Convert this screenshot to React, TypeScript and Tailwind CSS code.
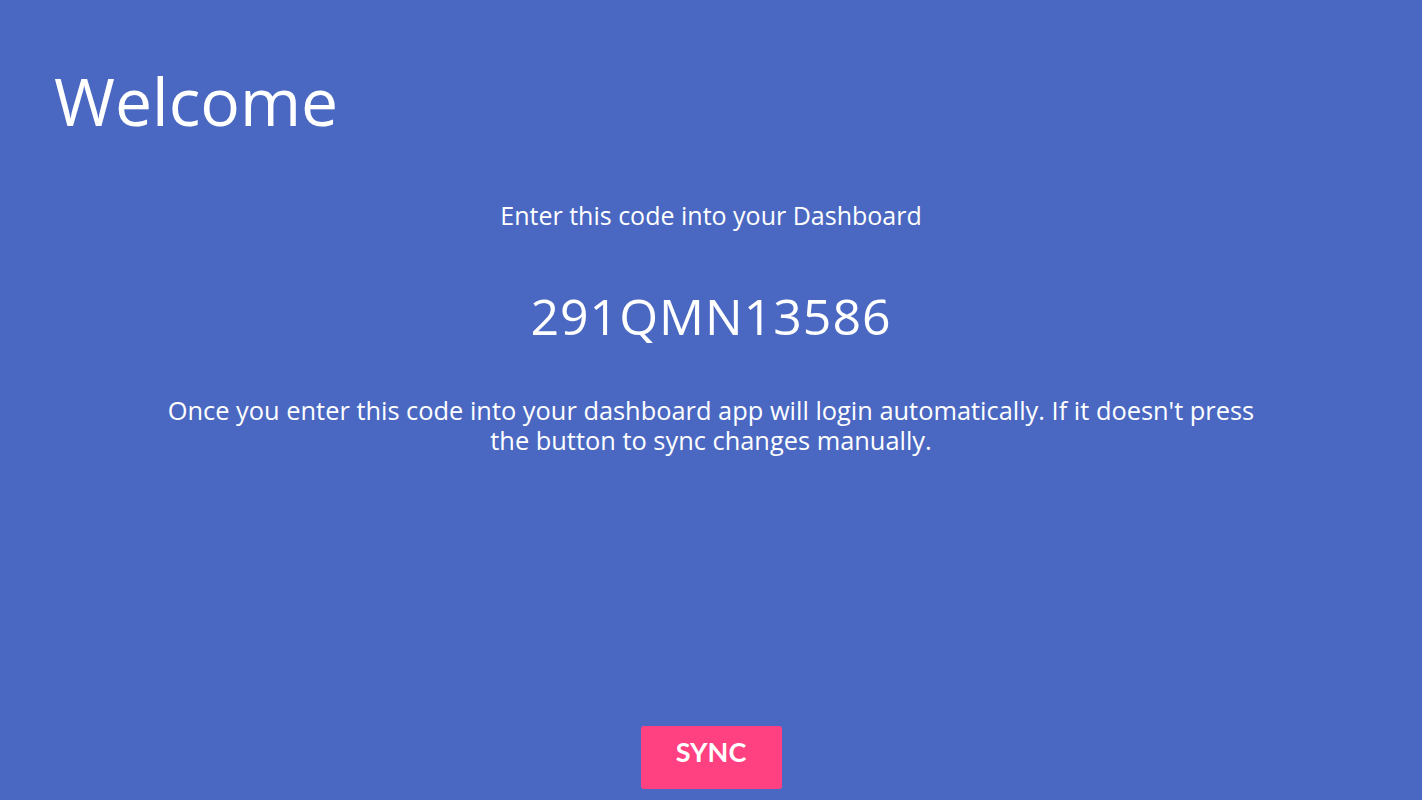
import React from 'react';

const App: React.FC = () => {
  return (
    <div className="w-full h-[800px] bg-[#4a68c2] text-white flex flex-col font-['Open_Sans',sans-serif] overflow-hidden">
      <h1 className="pl-[54px] pt-[56px] text-[66px] leading-[88px] font-normal">Welcome</h1>
      <div className="flex flex-col items-center text-center">
        <p className="mt-[54px] text-[25px] leading-[34px]">Enter this code into your Dashboard</p>
        <p className="mt-[54px] text-[50px] leading-[60px] tracking-[1px]">291QMN13586</p>
        <p className="mt-[49px] max-w-[1100px] text-[25.4px] leading-[30px]">
          Once you enter this code into your dashboard app will login automatically. If it doesn't press the button to sync changes manually.
        </p>
      </div>
      <div className="mt-auto mb-[11px] flex justify-center">
        <button className="w-[141px] h-[63px] pb-[10px] rounded-[3px] bg-[#ff4081] font-['Lato',sans-serif] text-[27px] font-bold text-white">
          SYNC
        </button>
      </div>
    </div>
  );
};

export default App;
